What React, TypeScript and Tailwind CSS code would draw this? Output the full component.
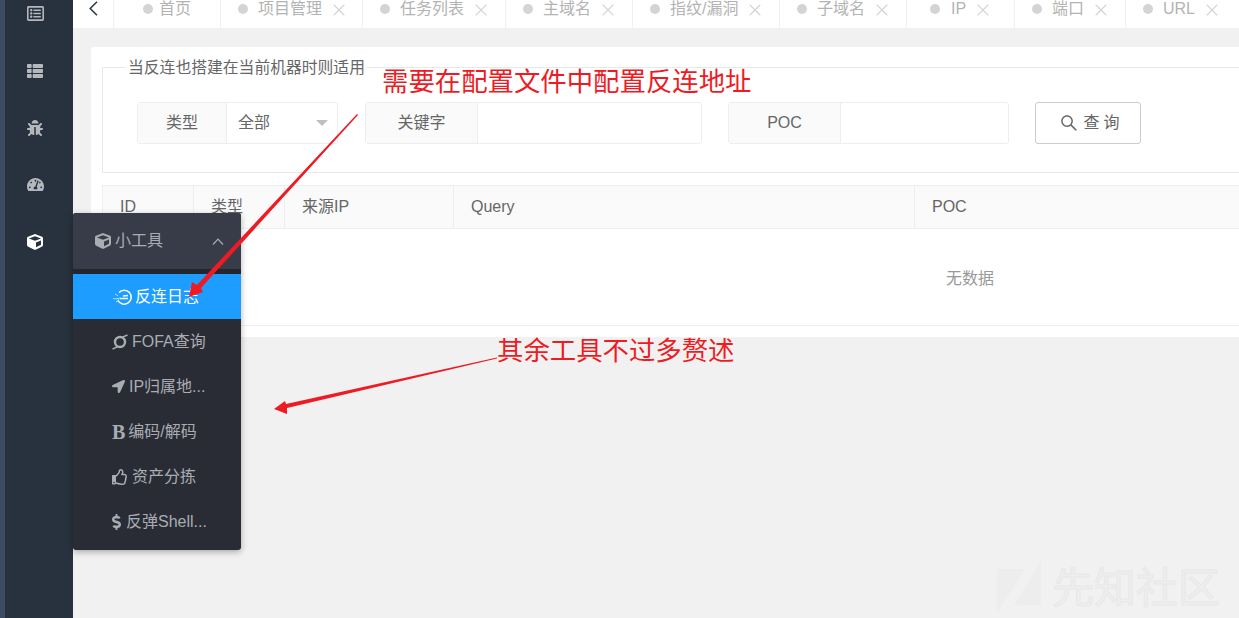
import type { ReactNode } from 'react'
import { AiOutlineSearch } from 'react-icons/ai'
import {
  FaBug,
  FaCube,
  FaDollarSign,
  FaLocationArrow,
  FaRegListAlt,
  FaRegThumbsUp,
  FaTachometerAlt,
  FaThList,
} from 'react-icons/fa'
import { FiX } from 'react-icons/fi'

const tabs = [
  { label: '首页', width: 'w-[107px]', pad: 'pl-[29px]', gap: 'mr-[6px]', closable: false },
  { label: '项目管理', width: 'w-[142px]', pad: 'pl-[17px]', gap: 'mr-[10px]', closable: true },
  { label: '任务列表', width: 'w-[143px]', pad: 'pl-[17px]', gap: 'mr-[10px]', closable: true },
  { label: '主域名', width: 'w-[127px]', pad: 'pl-[17px]', gap: 'mr-[10px]', closable: true },
  { label: '指纹/漏洞', width: 'w-[147px]', pad: 'pl-[17px]', gap: 'mr-[10px]', closable: true },
  { label: '子域名', width: 'w-[127px]', pad: 'pl-[17px]', gap: 'mr-[10px]', closable: true },
  { label: 'IP', width: 'w-[108px]', pad: 'pl-[23px]', gap: 'mr-[11px]', closable: true },
  { label: '端口', width: 'w-[111px]', pad: 'pl-[17px]', gap: 'mr-[10px]', closable: true },
  { label: 'URL', width: 'w-[111px]', pad: 'pl-[17px]', gap: 'mr-[10px]', closable: true },
]

const columns = [
  { label: 'ID', width: 'w-[91px]' },
  { label: '类型', width: 'w-[91px]' },
  { label: '来源IP', width: 'w-[169px]' },
  { label: 'Query', width: 'w-[461px]' },
  { label: 'POC', width: 'flex-1' },
]

function FofaIcon() {
  return (
    <svg viewBox="0 0 16 16" className="size-[16px]" fill="none" stroke="currentColor" strokeWidth="2.4">
      <circle cx="8" cy="8" r="5" />
      <path d="M10.5 3.2 15.5 1M5.5 12.8.5 15" strokeWidth="1.4" />
    </svg>
  )
}

function ReverseLogIcon() {
  return (
    <svg viewBox="0 0 20 18" className="h-[18px] w-[20px]" fill="none" stroke="currentColor" strokeWidth="1.5">
      <path d="M6 4.500a7 7 0 1 1-1 8" />
      <path d="M7 10.500h8M15 7.500 10 8" />
      <path d="M0 10.500c2 .5 4 .5 7-.5M3 14c1-.5 2-1.500 3-2.500M2 6c1 .5 2 1 3 2" strokeWidth="1" opacity="0.7" />
    </svg>
  )
}

const menuItems: { label: string; icon: ReactNode; gap: string }[] = [
  { label: 'FOFA查询', icon: <FofaIcon />, gap: 'gap-[4px]' },
  { label: 'IP归属地...', icon: <FaLocationArrow className="size-[13px]" />, gap: 'gap-[4px]' },
  {
    label: '编码/解码',
    icon: <span className="text-[20px] leading-none font-bold [font-family:'Liberation_Serif',serif]">B</span>,
    gap: 'gap-[3px]',
  },
  { label: '资产分拣', icon: <FaRegThumbsUp className="size-[16px]" />, gap: 'gap-[4px]' },
  { label: '反弹Shell...', icon: <FaDollarSign className="h-[16px] w-[9px]" />, gap: 'gap-[5px]' },
]

function FieldGroup({ label, labelWidth, width, children }: { label: string; labelWidth: string; width: string; children?: ReactNode }) {
  return (
    <div className={`flex h-[42px] rounded-[3px] border border-[#eeeeee] ${width}`}>
      <div className={`flex shrink-0 items-center justify-center border-r border-[#eeeeee] bg-[#fafafa] ${labelWidth}`}>{label}</div>
      <div className="flex flex-1 items-center justify-between pr-[9px] pl-[11px]">{children}</div>
    </div>
  )
}

export default function App() {
  return (
    <div className="relative flex h-[618px] w-[1239px] overflow-hidden bg-[#f1f1f1] text-[16px] text-[#666666] [font-family:'Liberation_Sans','Noto_Sans_CJK_SC',sans-serif]">
      {/* 左侧导航 */}
      <aside className="flex w-[73px] shrink-0 bg-[#27323e]">
        <div className="w-[5px] bg-[#3d4d61]" />
        <div className="-mt-[15px] flex flex-1 flex-col text-[#b4b8bc]">
          <div className="flex h-[57px] items-center justify-center pr-[8px]"><FaRegListAlt className="size-[17px]" /></div>
          <div className="flex h-[57px] items-center justify-center pr-[8px]"><FaThList className="size-[16px]" /></div>
          <div className="flex h-[57px] items-center justify-center pr-[8px]"><FaBug className="size-[16px]" /></div>
          <div className="flex h-[57px] items-center justify-center pr-[8px]"><FaTachometerAlt className="size-[17px]" /></div>
          <div className="flex h-[57px] items-center justify-center pr-[8px] text-white"><FaCube className="size-[16px]" /></div>
        </div>
      </aside>

      <main className="flex min-w-0 flex-1 flex-col">
        {/* 标签栏 */}
        <div className="flex h-[28px] shrink-0 bg-white">
          <div className="flex w-[40px] shrink-0 items-start pt-[1px] pl-[16px] text-[#2a3542]">
            <svg viewBox="0 0 9 15" className="h-[15px] w-[9px]" fill="none" stroke="currentColor" strokeWidth="1.5">
              <path d="M8 .7 1.200 7.500 8 14.300" />
            </svg>
          </div>
          {tabs.map((tab) => (
            <div key={tab.label} className={`flex shrink-0 items-start border-l border-[#f0f0f0] text-[#b3b3b3] ${tab.width} ${tab.pad}`}>
              <span className={`mt-[4px] size-[10px] shrink-0 rounded-full bg-[#d4d4d4] ${tab.gap}`} />
              <span className="leading-[17px]">{tab.label}</span>
              {tab.closable ? <FiX className="ml-[7px] size-[20px] shrink-0 stroke-[1.300] text-[#d4d4d4]" /> : null}
            </div>
          ))}
        </div>

        {/* 内容卡片 */}
        <div className="mt-[19px] ml-[18px] h-[290px] rounded-l-[4px] bg-white pt-[13px] pl-[11px]">
          <fieldset className="h-[113px] border border-r-0 border-[#e8e8e8] pl-[34px]">
            <legend className="ml-[-11px] px-[2px] text-[15.8px] leading-[1]">当反连也搭建在当前机器时则适用</legend>
            <div className="mt-[26px] flex items-center">
              <FieldGroup label="类型" labelWidth="w-[89px]" width="w-[201px]">
                <span>全部</span>
                <span className="h-0 w-0 border-x-[6px] border-t-[6px] border-x-transparent border-t-[#bfbfbf]" />
              </FieldGroup>
              <div className="ml-[27px]">
                <FieldGroup label="关键字" labelWidth="w-[112px]" width="w-[337px]" />
              </div>
              <div className="ml-[26px]">
                <FieldGroup label="POC" labelWidth="w-[112px]" width="w-[281px]" />
              </div>
              <button type="button" className="ml-[26px] flex h-[42px] w-[106px] items-center justify-center rounded-[3px] border border-[#cccccc] pl-[7px] tracking-[4px] text-[#666666]">
                <AiOutlineSearch className="mr-[4px] size-[20px]" />
                查询
              </button>
            </div>
          </fieldset>

          <div className="mt-[12px]">
            <div className="flex h-[44px] border-y border-[#eeeeee] bg-[#fafafa]">
              {columns.map((col) => (
                <div key={col.label} className={`flex items-center border-l border-[#eeeeee] pl-[17px] ${col.width}`}>
                  {col.label}
                </div>
              ))}
            </div>
            <div className="flex h-[97px] items-center justify-center border-b border-l border-[#eeeeee] pt-[3px] pr-[1px] pl-[599px] text-[#999999]">无数据</div>
          </div>
        </div>
      </main>

      {/* 弹出菜单 */}
      <div className="absolute top-[213px] left-[73px] w-[168px] overflow-hidden rounded-[3px] bg-[#2a2c35] pb-[6px] text-[#a8adb3] shadow-[0_2px_6px_rgba(0,0,0,0.3)]">
        <div className="flex h-[56px] items-center justify-between bg-[#383b48] pr-[17px] pl-[22px]">
          <div className="flex items-center gap-[4px]">
            <FaCube className="size-[16px]" />
            <span>小工具</span>
          </div>
          <svg viewBox="0 0 12 7" className="h-[7px] w-[12px]" fill="none" stroke="currentColor" strokeWidth="1.2">
            <path d="M1 6.5 6 1.200l5 5.300" />
          </svg>
        </div>
        <div className="h-[5px] bg-[#23262e]" />
        <div className="flex h-[45px] items-center gap-[2px] bg-[#1c9dff] pl-[40px] text-white">
          <ReverseLogIcon />
          <span>反连日志</span>
        </div>
        {menuItems.map((item) => (
          <div key={item.label} className={`flex h-[45px] items-center whitespace-nowrap pl-[39px] ${item.gap}`}>
            {item.icon}
            <span>{item.label}</span>
          </div>
        ))}
      </div>

      {/* 标注 */}
      <svg className="pointer-events-none absolute inset-0" width="1239" height="618" viewBox="0 0 1239 618">
        <polygon points="357,114 358,115 201,288 203,292 189,297 192,282 197,285" fill="#ed1c24" />
        <polygon points="497,357.500 497,358.500 287,408 287,414 274,409 285,401 286,404" fill="#ed1c24" />
        <path d="M997 569h28l-28 44zM1014 605l27-44v44z" fill="#ededed" />
      </svg>
      <span className="absolute top-[68px] left-[382px] text-[26.4px] leading-[28px] whitespace-nowrap text-[#ed1c24]">需要在配置文件中配置反连地址</span>
      <span className="absolute top-[337px] left-[497px] text-[26.4px] leading-[28px] whitespace-nowrap text-[#ed1c24]">其余工具不过多赘述</span>
      <span className="absolute top-[565px] left-[1052px] text-[42px] leading-[48px] whitespace-nowrap text-[#eeeeee] [-webkit-text-stroke:1px_#e8e8e8]">先知社区</span>
    </div>
  )
}
